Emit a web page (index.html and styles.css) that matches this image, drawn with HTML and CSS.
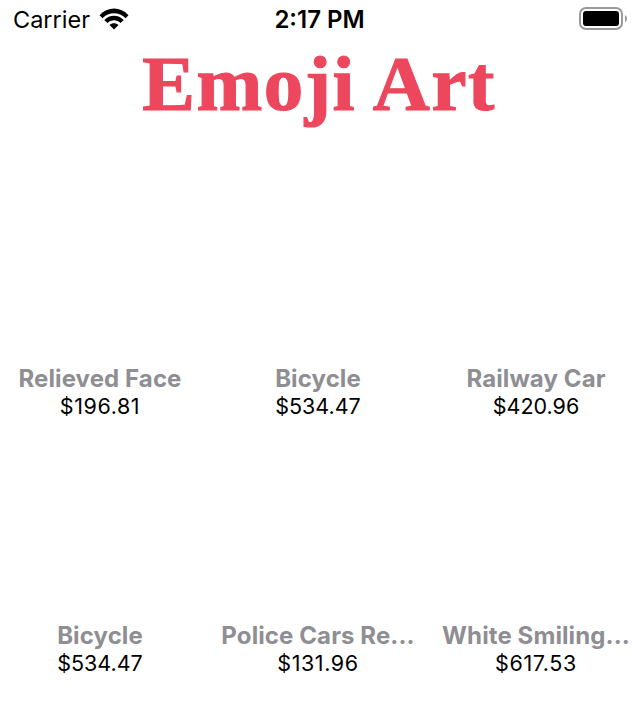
FILE: index.html
```html
<!DOCTYPE html>
<html lang="en">
<head>
<meta charset="utf-8">
<title>Emoji Art</title>
<link rel="stylesheet" href="styles.css">
</head>
<body>
<header class="status">
  <div class="carrier"><span>Carrier</span>
    <svg class="wifi" viewBox="0 0 30 22" width="30" height="22"><path d="M0.500 7.200C8.500-1.600 21.500-1.600 29.500 7.200L26.500 10.200C20.300 3.500 9.700 3.500 3.500 10.200Z"/><path d="M5.300 12C10.700 6.200 19.300 6.200 24.700 12L21.500 15C18 11.200 12 11.200 8.500 15Z"/><path d="M10.500 17C13 14.600 17 14.600 19.500 17L15 21.500Z"/></svg>
  </div>
  <time class="clock">2:17 PM</time>
  <svg class="battery" viewBox="0 0 49 24" width="49" height="24"><rect x="1" y="1" width="42" height="21" rx="6" class="shell"/><rect x="4" y="4" width="36" height="15" rx="3"/><path class="cap" d="M46 8Q48 9 48 11.500T46 15Z"/></svg>
</header>
<h1 class="title">Emoji Art</h1>
<main class="grid">
  <article class="product"><h2 class="name">Relieved Face</h2><p class="price loose">$196.81</p></article>
  <article class="product"><h2 class="name">Bicycle</h2><p class="price">$534.47</p></article>
  <article class="product"><h2 class="name">Railway Car</h2><p class="price">$420.96</p></article>
  <article class="product"><h2 class="name">Bicycle</h2><p class="price">$534.47</p></article>
  <article class="product"><h2 class="name">Police Cars Re...</h2><p class="price loose">$131.96</p></article>
  <article class="product"><h2 class="name">White Smiling...</h2><p class="price loose">$617.53</p></article>
</main>
</body>
</html>
```
FILE: styles.css
```css
body { margin: 0; height: 712px; overflow: hidden; background: #fff; color: #000; font-family: Inter, sans-serif; }
.status { display: grid; grid-template-columns: 1fr auto 1fr; height: 38px; align-items: center; padding: 0 8px 2px 13px; }
.carrier { display: flex; align-items: center; gap: 9px; font-size: 23.5px; }
.clock { font-size: 24px; font-weight: 600; margin-right: 2px; }
.battery { justify-self: end; }
.shell { fill: none; stroke: #999; stroke-width: 2; }
.cap { fill: #999; }
.title { margin: 0; height: 88px; text-align: center; font: bold 79px/87px "Liberation Serif", serif; letter-spacing: 1.5px; text-indent: 2px; color: #ed475d; -webkit-text-stroke: 1.2px #ed475d; }
.grid { display: grid; grid-template-columns: 200px 236px 200px; grid-template-rows: 257px 257px; padding-top: 34px; }
.product { display: flex; flex-direction: column; justify-content: flex-end; align-items: center; }
.name, .price { margin: 0; white-space: nowrap; line-height: 28px; }
.name { font-size: 24px; font-weight: 650; letter-spacing: 0.1px; color: #8e8e93; }
.price { font-size: 21.5px; line-height: 26px; letter-spacing: 0; }
.loose { letter-spacing: 0.6px; }
```
